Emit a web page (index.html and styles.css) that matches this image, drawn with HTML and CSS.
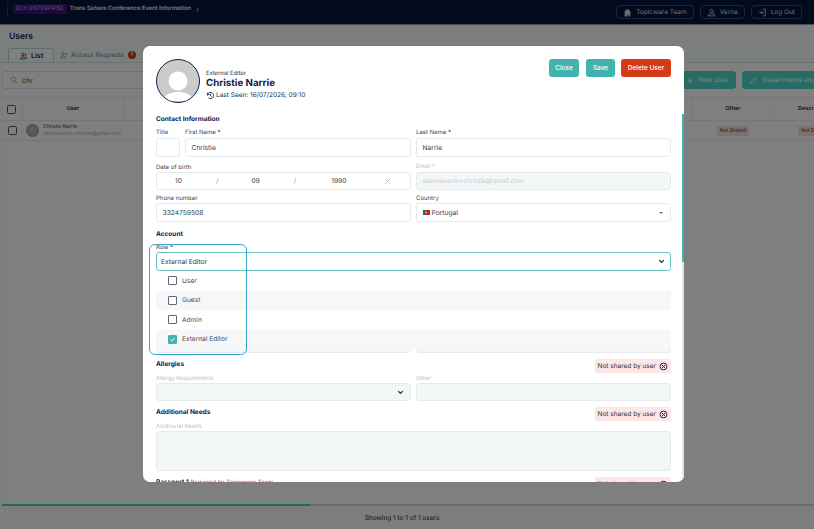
FILE: index.html
```html
<!DOCTYPE html>
<html lang="en">
<head>
<meta charset="utf-8">
<title>Users</title>
<link rel="stylesheet" href="styles.css">
</head>
<body>
<div class="page">
  <header class="topbar">
    <span class="topbar-rule"></span>
    <span class="tenant">ECH ENTERPRISE</span>
    <span class="crumb">Trans Sahara Conference Event Information</span>
    <span class="crumb-arrow">›</span>
    <nav class="top-actions">
      <a class="top-btn"><svg class="top-icon" viewBox="0 0 16 16"><path class="fill" d="M3 15V5l3-1V2h4v2l3 1v10h-3v-3H8v3z"/></svg>Topicware Team</a>
      <a class="top-btn"><svg class="top-icon" viewBox="0 0 16 16"><circle class="line" cx="8" cy="5" r="2.6"/><path class="line" d="M2 14c.5-3 2.5-4 6-4s5.500 1 6 4zM11 8l2 1"/></svg>Verna</a>
      <a class="top-btn"><svg class="top-icon" viewBox="0 0 16 16"><path class="line" d="M9 2h4v12H9M2 8h7M6 5l3 3-3 3"/></svg>Log Out</a>
    </nav>
  </header>

  <main class="content">
    <h1 class="page-title">Users</h1>
    <div class="tabs">
      <a class="tab tab-active"><svg class="tab-icon" viewBox="0 0 16 16"><circle class="line-dark" cx="6" cy="5" r="2.5"/><path class="line-dark" d="M1.500 14c0-3 2-4.500 4.500-4.500s4.500 1.500 4.500 4.500zM10 3a2.500 2.500 0 0 1 0 5M12 10c1.500.5 2.500 2 2.500 4"/></svg>List</a>
      <a class="tab"><svg class="tab-icon" viewBox="0 0 16 16"><circle class="line-soft" cx="6" cy="5" r="2.5"/><path class="line-soft" d="M1.500 14c0-3 2-4.500 4.500-4.500s4.500 1.500 4.500 4.500zM12.500 4v4M10.500 6h4"/></svg>Access Requests<span class="tab-badge">1</span></a>
    </div>
    <section class="panel">
      <div class="toolbar">
        <div class="search"><svg class="search-icon" viewBox="0 0 16 16"><circle class="line-soft" cx="7" cy="7" r="4.500"/><path class="line-soft" d="M10.500 10.500 14 14"/></svg>chr</div>
        <a class="action-btn"><span class="plus">+</span>New User</a>
        <a class="action-btn action-wide"><svg class="pencil" viewBox="0 0 16 16"><path class="line-pale" d="M2.500 13.500l1-3.500 7-7 2.500 2.500-7 7z"/></svg>Departments and Groups</a>
      </div>
      <div class="table">
        <div class="table-row table-head">
          <div class="cell cell-check"><span class="check"></span></div>
          <div class="cell cell-user">User</div>
          <div class="cell cell-fill"></div>
          <div class="cell cell-other">Other</div>
          <div class="cell cell-desc">Description</div>
        </div>
        <div class="table-row table-body">
          <div class="cell cell-check"><span class="check"></span></div>
          <div class="cell cell-user cell-person">
            <span class="mini-avatar"></span>
            <span class="person"><span class="person-name">Christie Narrie</span><span class="person-mail">demoeventr+christie@gmail.com</span></span>
          </div>
          <div class="cell cell-fill"></div>
          <div class="cell cell-other"><span class="not-shared">Not Shared</span></div>
          <div class="cell cell-desc"><span class="not-shared">Not Shared</span></div>
        </div>
      </div>
    </section>
    <div class="page-scroll"><span class="page-scroll-thumb"></span></div>
    <footer class="page-foot">Showing 1 to 1 of 1 users</footer>
  </main>
</div>

<div class="overlay"></div>

<div class="modal">
  <div class="modal-body">
    <div class="profile">
      <div class="avatar"><svg class="avatar-art" viewBox="0 0 41 41"><circle cx="21" cy="21" r="9.500"/><path d="M5 43c1-8 8-11 16-11s15 3 16 11z"/></svg></div>
      <div class="identity">
        <span class="role-name">External Editor</span>
        <span class="user-name">Christie Narrie</span>
        <span class="last-seen"><svg class="clock" viewBox="0 0 16 16"><path class="line-navy" d="M2.500 8a5.500 5.500 0 1 1 2 4.300M2.500 3v3.500H6M8 5v3.200l2.200 1.300"/></svg>Last Seen: 16/07/2026, 09:10</span>
      </div>
      <div class="modal-actions">
        <button class="btn btn-teal btn-close" type="button">Close</button>
        <button class="btn btn-teal btn-save" type="button">Save</button>
        <button class="btn btn-red" type="button">Delete User</button>
      </div>
    </div>

    <h2 class="section-title section-contact">Contact Information</h2>
    <div class="form-row row-names">
      <label class="field"><span class="label">Title</span><span class="input"></span></label>
      <label class="field"><span class="label">First Name *</span><span class="input">Christie</span></label>
      <label class="field"><span class="label">Last Name *</span><span class="input">Narrie</span></label>
    </div>
    <div class="form-row row-two row-birth">
      <div class="field field-low">
        <span class="label">Date of birth</span>
        <span class="input input-date"><span>10</span><span class="slash">/</span><span>09</span><span class="slash">/</span><span>1990</span><svg class="date-clear" viewBox="0 0 10 10"><path d="M1.500 1.500l7 7M8.500 1.500l-7 7"/></svg></span>
      </div>
      <div class="field">
        <span class="label label-muted">Email *</span>
        <span class="input input-disabled input-email">demoeventr+christie@gmail.com</span>
      </div>
    </div>
    <div class="form-row row-two row-phone">
      <div class="field field-tight"><span class="label">Phone number</span><span class="input">3324759508</span></div>
      <div class="field field-tight">
        <span class="label">Country</span>
        <span class="input input-select"><svg class="flag" viewBox="0 0 7 5"><rect width="3" height="5" fill="#1f6f3a"/><rect x="3" width="4" height="5" fill="#c8202b"/><circle cx="3" cy="2.500" r="1" fill="#e3c33a"/></svg>Portugal<span class="caret"></span></span>
      </div>
    </div>

    <h2 class="section-title section-account">Account</h2>
    <div class="field field-tight role-field">
      <span class="label">Role *</span>
      <span class="input input-role">External Editor<svg class="chevron" viewBox="0 0 10 10"><path d="M2.500 3.500 5 6l2.500-2.500"/></svg></span>
    </div>
    <div class="form-row row-two row-hidden">
      <span class="input input-disabled input-hidden"></span>
      <span class="input input-disabled input-hidden"></span>
    </div>

    <div class="section-head">
      <h2 class="section-title">Allergies</h2>
      <span class="share-flag">Not shared by user<svg class="share-icon" viewBox="0 0 12 12"><circle cx="6" cy="6" r="4.500"/><path d="M4 4l4 4M8 4l-4 4"/></svg></span>
    </div>
    <div class="form-row row-two">
      <div class="field field-tight"><span class="label label-muted">Allergy Requirements</span><span class="input input-disabled input-allergy"><svg class="chevron" viewBox="0 0 10 10"><path d="M2.500 3.500 5 6l2.500-2.500"/></svg></span></div>
      <div class="field field-tight"><span class="label label-muted">Other</span><span class="input input-disabled input-allergy"></span></div>
    </div>

    <div class="section-head">
      <h2 class="section-title">Additional Needs</h2>
      <span class="share-flag">Not shared by user<svg class="share-icon" viewBox="0 0 12 12"><circle cx="6" cy="6" r="4.500"/><path d="M4 4l4 4M8 4l-4 4"/></svg></span>
    </div>
    <div class="field field-tight field-needs"><span class="label label-muted">Additional Needs</span><span class="input input-disabled input-area"></span></div>

    <div class="section-head">
      <h2 class="section-title">Passport 1 <span class="required">Required by Topicware Team</span></h2>
      <span class="share-flag">Not shared by user<svg class="share-icon" viewBox="0 0 12 12"><circle cx="6" cy="6" r="4.500"/><path d="M4 4l4 4M8 4l-4 4"/></svg></span>
    </div>
  </div>

  <div class="role-menu">
    <div class="role-option"><span class="role-check"></span>User</div>
    <div class="role-option role-option-alt"><span class="role-check"></span>Guest</div>
    <div class="role-option"><span class="role-check"></span>Admin</div>
    <div class="role-option role-option-alt"><span class="role-check role-check-on"><svg viewBox="0 0 10 10"><path d="M2 5.200 4.200 7.300 8 3"/></svg></span>External Editor</div>
  </div>
  <div class="role-highlight"></div>
  <div class="modal-scroll"><span class="modal-scroll-thumb"></span></div>
</div>
</body>
</html>
```

FILE: styles.css
```css
* { box-sizing: border-box; }
html, body { margin: 0; height: 100%; overflow: hidden; }
body { font-family: Inter, "Liberation Sans", sans-serif; color: #0f1f3d; background: #fff; text-rendering: geometricPrecision; }
h1, h2 { margin: 0; }

.page { display: flex; flex-direction: column; width: 814px; height: 529px; }

/* top bar */
.topbar { display: flex; align-items: center; flex: 0 0 25px; height: 25px; padding: 0 12px 7px 7px; background: #05163a; border-bottom: 1px solid #8f96a4; }
.topbar-rule { width: 1px; height: 16px; margin-right: 5px; background: #25365c; }
.tenant { padding: 1px 3px; margin-right: 3px; font-size: 5.700px; line-height: 8px; color: #b79be8; background: #3b1577; border-radius: 1px; white-space: nowrap; }
.crumb { font-size: 5.750px; font-weight: 600; color: #e8ebf0; white-space: nowrap; }
.crumb-arrow { margin-left: 5px; font-size: 8px; color: #c6cbd5; }
.top-actions { display: flex; gap: 6px; margin-left: auto; margin-top: 7px; }
.top-btn { display: flex; align-items: center; justify-content: center; gap: 4px; height: 14px; padding: 0 6px; font-size: 6.500px; color: #d8dce4; border: 1px solid #3a4968; border-radius: 4px; white-space: nowrap; }
.top-icon { width: 9px; height: 9px; }
.fill { fill: #d8dce4; }
.line { fill: none; stroke: #d8dce4; stroke-width: 1.4; }

/* page */
.content { display: flex; flex-direction: column; flex: 1; min-height: 0; padding: 0 0 0 2px; background: #f9fafb; }
.page-title { margin: 7px 0 0 7px; font-size: 8.500px; line-height: 11px; font-weight: 600; color: #172340; }
.tabs { display: flex; align-items: flex-end; height: 14px; margin: 5px 0 0 6px; }
.tab { display: flex; align-items: center; gap: 3px; height: 14px; padding: 0 6px; font-size: 6.500px; color: #7b838f; white-space: nowrap; }
.tab-active { padding: 0 10px 0 11px; font-size: 7px; font-weight: 600; color: #172340; background: #fff; border: 1px solid #b6dcd8; border-bottom: 0; border-radius: 3px 3px 0 0; }
.tab-icon { width: 8px; height: 8px; }
.line-dark { fill: none; stroke: #172340; stroke-width: 1.4; }
.line-soft { fill: none; stroke: #7b838f; stroke-width: 1.2; }
.line-pale { fill: none; stroke: #fff; stroke-width: 1.3; }
.tab-badge { display: flex; align-items: center; justify-content: center; width: 8px; height: 8px; margin-left: 1px; font-size: 5.500px; font-weight: 600; color: #fff; background: #d4381a; border-radius: 50%; }
.panel { flex: 1; min-height: 0; padding: 8px 0 0; overflow: hidden; background: #fff; border-top: 1px solid #cfe6e3; }
.toolbar { display: flex; align-items: stretch; gap: 6px; height: 18px; }
.search { display: flex; align-items: center; gap: 4px; flex: 0 0 671px; padding: 0 7px; font-size: 7px; color: #39424f; background: #fff; border: 1px solid #dfe3e8; border-radius: 3px; }
.search-icon { width: 8px; height: 8px; }
.action-btn { display: flex; align-items: center; gap: 5px; flex: 0 0 auto; padding: 0 7px; font-size: 6.500px; color: #fff; background: #4ed8c9; border-radius: 3px; white-space: nowrap; }
.plus { font-size: 11px; line-height: 11px; }
.pencil { width: 9px; height: 9px; }
.table { margin-top: 8px; border-top: 1px solid #e8ebee; }
.table-row { display: flex; }
.table-head { height: 23px; border-bottom: 1px solid #e8ebee; font-size: 5.500px; font-weight: 600; color: #172340; }
.table-body { height: 20px; border-bottom: 1px solid #e8ebee; }
.cell { display: flex; align-items: center; justify-content: center; }
.cell-check { flex: 0 0 21px; }
.check { width: 9px; height: 9px; margin-right: 1px; background: #fff; border: 1px solid #4b5563; border-radius: 1.500px; }
.cell-user { flex: 0 0 101px; }
.table-head .cell-check, .table-head .cell-user { border-right: 1px solid #eef0f2; }
.cell-person { justify-content: flex-start; gap: 4px; padding-left: 3px; }
.mini-avatar { width: 13px; height: 13px; background: #b9b9b9; border-radius: 50%; box-shadow: inset 0 0 0 3px #a6a6a6; }
.person { display: flex; flex-direction: column; line-height: 6.500px; }
.person-name { font-size: 5px; color: #334; }
.person-mail { font-size: 5px; color: #a6acb5; }
.cell-fill { flex: 1; }
.cell-other { flex: 0 0 82px; }
.table-head .cell-other { border-left: 1px solid #eef0f2; border-right: 1px solid #eef0f2; }
.cell-desc { flex: 0 0 40px; justify-content: flex-start; padding-left: 24px; overflow: hidden; white-space: nowrap; }
.not-shared { flex: 0 0 auto; padding: 2px 3px; font-size: 5px; line-height: 6px; color: #5f1f1a; background: #fbe3e1; border-radius: 1px; white-space: nowrap; }
.page-scroll { flex: 0 0 2px; background: #d9dbde; }
.page-scroll-thumb { display: block; width: 308px; height: 2px; background: #40d0c0; }
.page-foot { flex: 0 0 23px; display: flex; align-items: center; justify-content: center; padding-right: 12px; font-size: 6.500px; color: #1c2739; background: #fafafa; }

/* overlay and dialog */
.overlay { position: fixed; inset: 0; background: rgba(0, 0, 0, .5); }
.modal { position: absolute; left: 143px; top: 46px; width: 541px; height: 436px; overflow: hidden; background: #fff; border-radius: 7px; }
.modal-body { padding: 13px 13px 0; }
.profile { display: flex; align-items: flex-start; height: 44px; }
.avatar { flex: 0 0 44px; width: 44px; height: 44px; overflow: hidden; background: #cbcbcb; border: 1.500px solid #10224d; border-radius: 50%; }
.avatar-art { display: block; width: 41px; height: 41px; fill: #fff; }
.identity { display: flex; flex-direction: column; margin: 10.500px 0 0 6px; }
.role-name { font-size: 5.800px; line-height: 8px; color: #243049; }
.user-name { font-size: 9.700px; line-height: 12px; font-weight: 700; color: #10224d; }
.last-seen { display: flex; align-items: center; gap: 1px; margin-top: 1px; font-size: 6.500px; line-height: 9px; color: #243049; white-space: nowrap; }
.clock { width: 9px; height: 9px; }
.line-navy { fill: none; stroke: #10224d; stroke-width: 1.6; }
.modal-actions { display: flex; gap: 6px; margin-left: auto; }
.btn { height: 18px; padding: 0; font: 500 6.500px Inter, "Liberation Sans", sans-serif; color: #fff; border: 0; border-radius: 3px; }
.btn-teal { background: #42b3ad; }
.btn-red { width: 50px; background: #d33a16; }
.btn-close { width: 30px; margin-right: 1px; }
.btn-save { width: 29px; }
.section-title { font-size: 6.500px; line-height: 10px; font-weight: 700; color: #10224d; }
.section-contact { margin-top: 11px; }
.section-account { margin-top: 7px; }
.form-row { display: grid; gap: 5px; margin-top: 4px; }
.row-names { grid-template-columns: 24px 226px 1fr; }
.row-two { grid-template-columns: 255px 1fr; }
.row-birth { margin-top: 5px; }
.field { display: flex; flex-direction: column; justify-content: flex-end; }
.field-low .label { margin-bottom: 0; }
.field-tight .label { margin-bottom: 0; }
.label { height: 9px; margin-bottom: 1px; font-size: 6px; line-height: 9px; color: #3b4658; white-space: nowrap; }
.label-muted { font-size: 5.700px; color: #b9bfc7; }
.input { display: flex; align-items: center; height: 19px; padding: 0 5.500px; font-size: 6.700px; color: #36404f; background: #fff; border: 1px solid #e6e9ed; border-radius: 3px; white-space: nowrap; }
.input-date { height: 18px; justify-content: flex-start; padding: 0 0 0 18px; }
.input-date > span { flex: 0 0 auto; }
.input-date > span:nth-child(2) { margin-left: 34px; }
.input-date > span:nth-child(3) { margin-left: 33px; }
.input-date > span:nth-child(4) { margin-left: 34px; }
.input-date > span:nth-child(5) { margin-left: 35px; }
.slash { color: #8a919c; }
.date-clear { width: 7px; height: 7px; margin-left: 38px; fill: none; stroke: #a9afb8; stroke-width: .9; }
.input-disabled { background: #f4f7f8; }
.input-email { height: 18px; font-size: 6.500px; color: #c5cbd2; }
.input-select { gap: 2px; }
.flag { width: 7px; height: 5px; }
.caret { width: 0; height: 0; margin-left: auto; margin-right: 2px; border-left: 2px solid transparent; border-right: 2px solid transparent; border-top: 2.500px solid #6b7280; }
.role-field { margin-top: 4px; }
.input-role { padding: 0 4px; color: #2b3546; border-color: #6cc5c0; }
.chevron { width: 9px; height: 9px; margin-left: auto; fill: none; stroke: #1c2739; stroke-width: 1.300; }
.row-hidden { margin-top: 62px; }
.input-hidden { height: 20px; }
.section-head { display: flex; justify-content: space-between; align-items: flex-start; height: 14px; margin-top: 6px; }
.share-flag { display: flex; align-items: center; gap: 3px; height: 14px; padding: 0 3px; font-size: 6.500px; color: #2b3546; background: #fde6e5; border-radius: 1px; white-space: nowrap; }
.share-icon { width: 9px; height: 9px; fill: none; stroke: #10224d; stroke-width: 1.300; }
.section-head + .form-row { margin-top: 1px; }
.input-allergy { height: 18px; }
.field-needs { margin-top: 1px; }
.input-area { height: 40px; }
.required { font-weight: 500; font-size: 6px; color: #e2563c; }

.role-menu { position: absolute; left: 13px; top: 225px; width: 515px; background: #fff; }
.role-option { display: flex; align-items: center; gap: 5px; height: 19.500px; padding-left: 12px; font-size: 6.600px; color: #475160; }
.role-option-alt { background: #f5f7f8; }
.role-check { display: flex; width: 9px; height: 9px; background: #fff; border: 1px solid #5c6573; border-radius: 1px; }
.role-check-on { background: #3fb5ab; border-color: #3fb5ab; }
.role-check-on svg { width: 100%; height: 100%; fill: none; stroke: #fff; stroke-width: 1.300; }
.role-highlight { position: absolute; left: 6px; top: 198px; width: 98px; height: 111px; border: 1.500px solid #3ba5d2; border-radius: 6px; }
.modal-scroll { position: absolute; right: 0; top: 68px; bottom: 0; width: 2px; background: #e4e6e8; }
.modal-scroll-thumb { display: block; height: 148px; background: #40b6ad; }
```
